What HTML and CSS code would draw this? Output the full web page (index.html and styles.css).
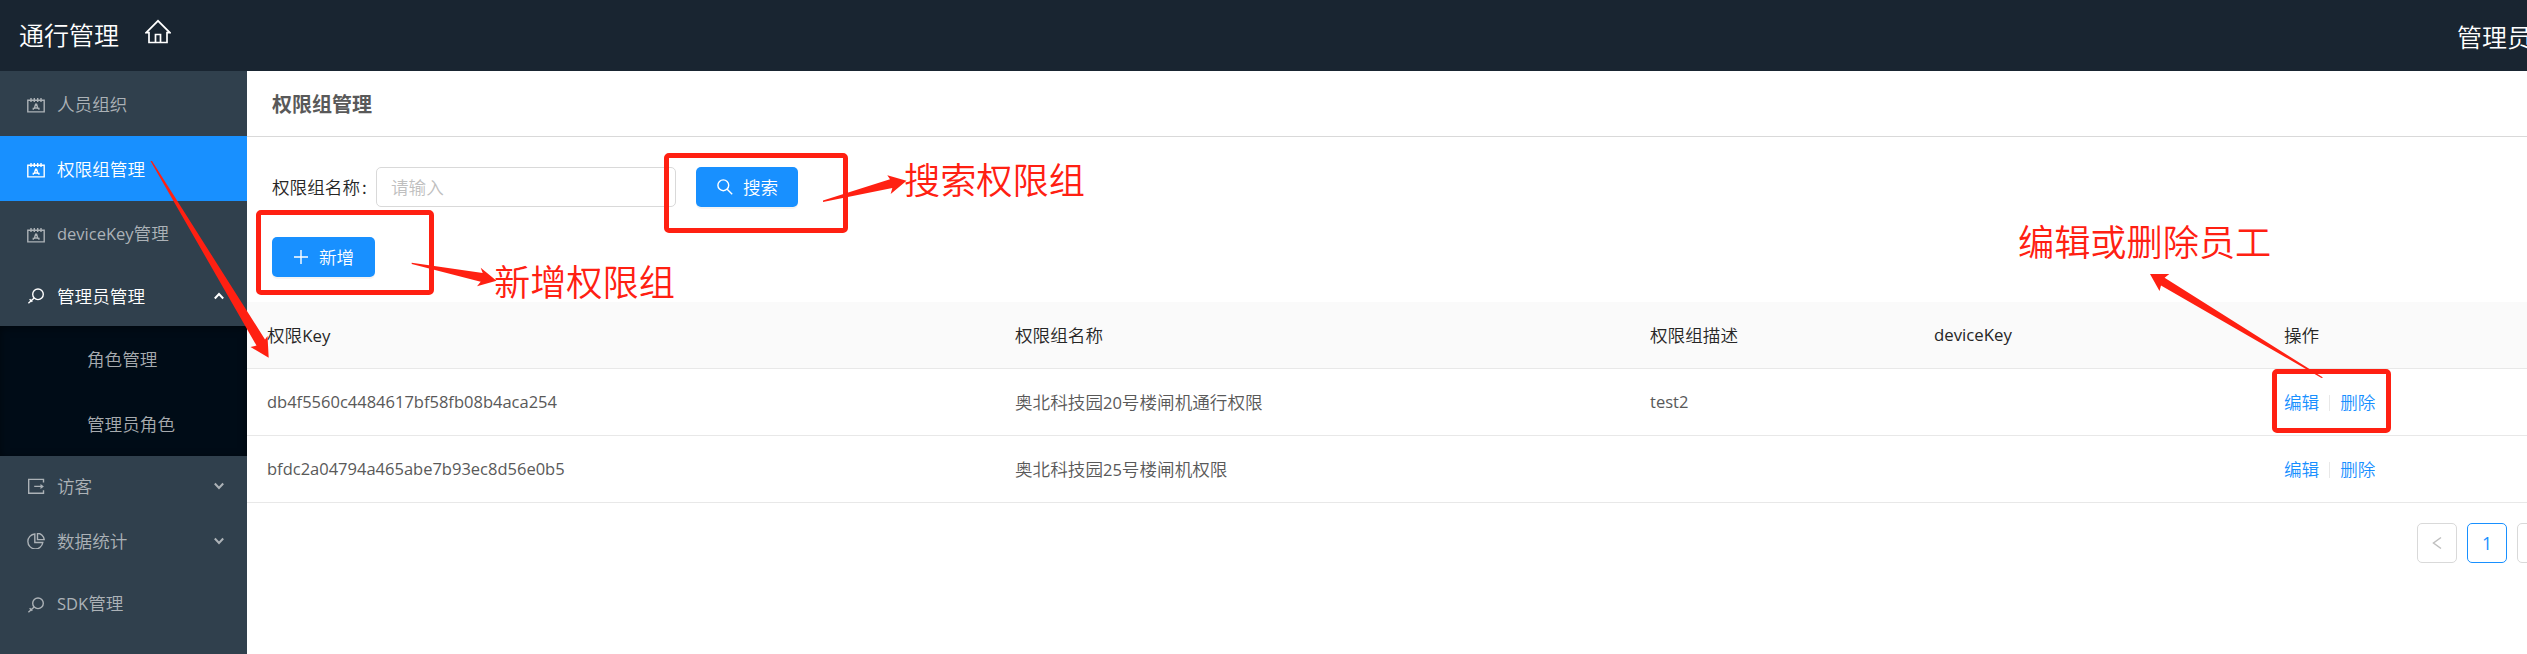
FILE: index.html
```html
<!DOCTYPE html>
<html lang="zh-CN">
<head>
<meta charset="utf-8">
<title>通行管理</title>
<link rel="stylesheet" href="styles.css">
</head>
<body>
<svg class="defs" width="0" height="0">
  <symbol id="card" viewBox="0 0 18 16"><path d="M.8 3.3H17.2V14.9H.8zM4 1v4M7.3 1v4M10.7 1v4M14 1v4M6.3 12.8V11.4h1L8.6 7.3h1l1.3 4.1h1v1.4M7.3 11h3.6"/></symbol>
  <symbol id="key" viewBox="0 0 18 16"><circle cx="11" cy="6.3" r="5.3"/><path d="M7.2 10 1.4 15.2M2.6 11.2l2.7 2.6"/></symbol>
  <symbol id="chev" viewBox="0 0 10 8"><path d="M.8 1.5 5 6 9.2 1.5"/></symbol>
</svg>
<div class="page">
  <header class="header">
    <span class="brand">通行管理</span>
    <svg class="home" width="26" height="26" viewBox="0 0 26 26"><path d="M1.2 13.6 13 1.8 24.8 13.6H22V23.5H4V13.6zM10.5 23.5V15.5h5v8"/></svg>
    <span class="user">管理员</span>
  </header>
  <div class="body">
    <nav class="side">
      <a class="item"><svg class="ico"><use href="#card"/></svg><span>人员组织</span></a>
      <a class="item active"><svg class="ico"><use href="#card"/></svg><span>权限组管理</span></a>
      <a class="item"><svg class="ico"><use href="#card"/></svg><span><span class="en">deviceKey</span>管理</span></a>
      <a class="item group open"><svg class="ico"><use href="#key"/></svg><span>管理员管理</span><svg class="chev up"><use href="#chev"/></svg></a>
      <div class="sub">
        <a class="item"><span>角色管理</span></a>
        <a class="item"><span>管理员角色</span></a>
      </div>
      <a class="item group first"><svg class="ico" viewBox="0 0 18 16"><path d="M16.5 4.6V1.4H1.7V15.3H16.5V12.2M7.2 8.4H15"/><path class="fill" d="M13.5 5.9 16.9 8.4 13.5 10.9z"/></svg><span>访客</span><svg class="chev"><use href="#chev"/></svg></a>
      <a class="item group"><svg class="ico" viewBox="0 0 18 16"><path d="M7.8 1A7.5 7.5 0 1 0 15.8 9.5H7.8zM10.5.3V6.6H17.2A6.8 6.8 0 0 0 10.5.3z"/></svg><span>数据统计</span><svg class="chev"><use href="#chev"/></svg></a>
      <a class="item last"><svg class="ico"><use href="#key"/></svg><span><span class="en">SDK</span>管理</span></a>
    </nav>
    <main class="main">
      <h1 class="title">权限组管理</h1>
      <div class="form">
        <label class="label">权限组名称<i>:</i></label>
        <div class="input">请输入</div>
        <button class="btn search"><svg width="16" height="16" viewBox="0 0 16 16"><circle cx="6.3" cy="6.3" r="5.4"/><path d="M10.2 10.2 15.2 15.2"/></svg>搜索</button>
      </div>
      <div class="tools"><button class="btn add"><svg width="14" height="14" viewBox="0 0 14 14"><path d="M7 0V14M0 7H14"/></svg>新增</button></div>
      <div class="table">
        <div class="row head"><span>权限<span class="en">Key</span></span><span>权限组名称</span><span>权限组描述</span><span class="en">deviceKey</span><span>操作</span></div>
        <div class="row"><span class="en">db4f5560c4484617bf58fb08b4aca254</span><span>奥北科技园<span class="en">20</span>号楼闸机通行权限</span><span class="en">test2</span><span></span><span class="ops"><a>编辑</a><i></i><a>删除</a></span></div>
        <div class="row"><span class="en">bfdc2a04794a465abe7b93ec8d56e0b5</span><span>奥北科技园<span class="en">25</span>号楼闸机权限</span><span></span><span></span><span class="ops"><a>编辑</a><i></i><a>删除</a></span></div>
      </div>
      <div class="pager">
        <span class="pg"><svg width="10" height="14" viewBox="0 0 10 14"><path d="M9 1.5 1.5 7 9 12.5"/></svg></span>
        <span class="pg on">1</span>
        <span class="pg"></span>
      </div>
    </main>
  </div>
  <div class="box box-add"></div>
  <div class="box box-search"></div>
  <div class="box box-ops"></div>
  <svg class="arrows" width="2527" height="654" viewBox="0 0 2527 654">
    <path d="M150.5 161 152 161 265 339.5 267.5 336 268.7 357.7 250.5 347 256.5 345.5z"/>
    <path d="M411.7 262.7 482.7 273 480.7 267.7 496.5 280.7 477 286.3 480.7 281.7 411.7 264z"/>
    <path d="M823 200.5 890 179.3 887.3 175.3 906.5 180.7 890.7 194 892.3 188 823 202z"/>
    <path d="M2323 377.5 2164.6 277.7 2169.3 274 2150 274 2159.5 291 2161 285.5 2321.5 378z"/>
  </svg>
  <span class="note note-add">新增权限组</span>
  <span class="note note-search">搜索权限组</span>
  <span class="note note-ops">编辑或删除员工</span>
</div>
</body>
</html>
```
FILE: styles.css
```css
* { box-sizing: border-box; }
body { margin: 0; font: 350 17.6px/26px "Noto Sans CJK SC", sans-serif; color: #595959; background: #fff; }
i { font-style: normal; }
svg { fill: none; stroke: currentColor; flex: none; }
.defs { position: absolute; }
.page { position: relative; width: 2527px; height: 654px; overflow: hidden; white-space: nowrap; }
.en { font-family: "Open Sans", "Noto Sans CJK SC", sans-serif; font-size: 16.5px; font-weight: 400; }
.header { display: flex; height: 71px; padding: 0 0 0 19px; background: #192531; color: #fff; font-size: 25px; line-height: 68px; }
.home { margin: 19px 0 0 26px; stroke-width: 1.7; }
.user { width: 70px; margin-left: auto; line-height: 72px; }
.body { display: flex; height: 583px; }
.side { width: 247px; flex: none; background: #30404d; color: #acb2b7; }
.item { display: flex; align-items: center; height: 65px; padding: 2px 23px 0 27px; }
.item > span { padding-bottom: 2px; }
.item .ico { width: 18px; height: 16px; margin-right: 12px; stroke-width: 1.4; }
.fill { fill: currentColor; stroke: none; }
.active { background: #1890ff; color: #fff; }
.group { height: 50px; margin-bottom: 5px; }
.open { color: #fff; margin: 4px 0 6px; }
.first { margin-top: 4px; }
.group > span { padding-bottom: 0; }
.last { padding-top: 4px; }
.chev { width: 10px; height: 8px; margin-left: auto; stroke-width: 2; }
.up { transform: scaleY(-1); }
.sub { height: 130px; background: #000c17; color: #a6aaae; box-shadow: inset 0 2px 8px rgba(0,0,0,.45); }
.sub .item { padding-left: 87px; }
.main { flex: 1; min-width: 0; }
.title { height: 66px; margin: 0; padding-left: 25px; border-bottom: 1px solid #d9d9d9; font-size: 20px; line-height: 66px; font-weight: 700; }
.form { display: flex; padding: 30px 0 0 25px; height: 70px; }
.label { width: 104px; color: #262626; line-height: 39px; }
.label i { margin-left: 2px; }
.input { width: 300px; height: 40px; padding-left: 14px; border: 1px solid #d9d9d9; border-radius: 5px; color: #bfbfbf; line-height: 37px; }
.btn { display: flex; align-items: center; height: 40px; padding: 0 19px; border: 0; border-radius: 5px; background: #1890ff; color: #fff; font: inherit; box-shadow: 0 2px 0 rgba(0,0,0,.045); }
.search { width: 102px; margin-left: 20px; gap: 10px; padding-left: 21px; }
.add { width: 103px; gap: 11px; padding-left: 22px; }
.btn svg { stroke-width: 1.4; }
.tools { padding: 30px 0 0 25px; height: 95px; }
.row { display: grid; grid-template-columns: 748px 635px 284px 350px 1fr; align-items: center; height: 67px; padding: 0 0 0 20px; border-bottom: 1px solid #e8e8e8; }
.head { background: #fafafa; color: #262626; }
.head .en { font-weight: 500; font-size: 16.8px; }
.ops { display: flex; align-items: center; color: #1890ff; }
.ops a { padding-bottom: 1px; }
.ops i { width: 1px; height: 16px; margin: 2px 10px 0; background: #e8e8e8; }
.pager { display: flex; gap: 10px; padding: 20px 0 0 2170px; }
.pg { display: flex; flex: none; align-items: center; justify-content: center; width: 40px; height: 40px; border: 1px solid #d9d9d9; border-radius: 5px; color: #bfbfbf; font-family: "Open Sans", sans-serif; }
.pg svg { stroke-width: 1.5; }
.on { border-color: #1890ff; color: #1890ff; font-weight: 500; }
.box { position: absolute; border: 5px solid #ff2012; border-radius: 5px; }
.box-add { left: 256px; top: 210px; width: 178px; height: 85px; }
.box-search { left: 664px; top: 153px; width: 184px; height: 80px; }
.box-ops { left: 2272px; top: 369px; width: 119px; height: 64px; }
.arrows { position: absolute; left: 0; top: 0; fill: #ff2012; stroke: none; }
.note { position: absolute; color: #ff2012; font-size: 36.2px; line-height: 48px; }
.note-add { left: 494px; top: 256px; }
.note-search { left: 904px; top: 154px; }
.note-ops { left: 2018px; top: 216px; }
```
